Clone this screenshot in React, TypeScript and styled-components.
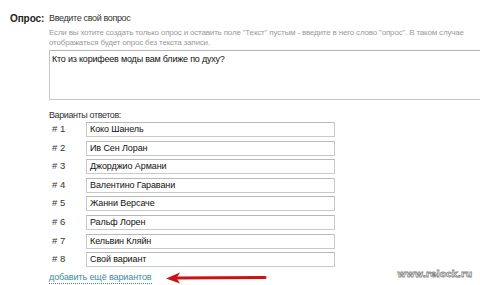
import React from "react";
import styled, { createGlobalStyle } from "styled-components";

const Global = createGlobalStyle`
  html, body { margin: 0; padding: 0; background: #fff; overflow: hidden; }
  body { font-family: Arial, "Liberation Sans", sans-serif; }
`;

const Page = styled.div`
  width: 480px;
  height: 285px;
  position: relative;
  overflow: hidden;
  box-sizing: border-box;
  padding: 12px 0 0 10px;
`;

const Field = styled.div`
  display: grid;
  grid-template-columns: 39px 1fr;
`;

const Label = styled.div`
  font-weight: bold;
  font-size: 10px;
  letter-spacing: -0.1px;
  color: #222;
  line-height: 13px;
`;

const Content = styled.div`
  display: flex;
  flex-direction: column;
  min-width: 0;
`;

const Title = styled.div`
  font-size: 9px;
  letter-spacing: -0.35px;
  color: #333;
  line-height: 13px;
`;

const Hint = styled.div`
  margin-top: 3px;
  font-size: 8px;
  letter-spacing: -0.18px;
  color: #9a9a9a;
  line-height: 10px;
  white-space: nowrap;
`;

const Question = styled.div`
  margin-top: 2px;
  width: 450px;
  height: 50px;
  box-sizing: border-box;
  border: 1px solid #c6c6c6;
  border-top-color: #b4b4b4;
  padding: 2px 2px;
  font-size: 9px;
  letter-spacing: -0.2px;
  color: #111;
  line-height: 12px;
`;

const Sub = styled.div`
  margin-top: 9px;
  font-size: 9px;
  letter-spacing: -0.4px;
  color: #333;
  line-height: 12px;
`;

const Options = styled.div`
  margin-top: 1px;
  display: flex;
  flex-direction: column;
  gap: 3.6px;
`;

const Option = styled.div`
  display: grid;
  grid-template-columns: 37px 249px;
  align-items: start;
`;

const Num = styled.div`
  padding-left: 3px;
  font-size: 9.5px;
  color: #333;
  line-height: 13px;
`;

const Input = styled.div`
  height: 15px;
  box-sizing: border-box;
  border: 1px solid #c9c9c9;
  border-top-color: #b8b8b8;
  padding: 0 3px;
  font-size: 9px;
  letter-spacing: -0.1px;
  color: #111;
  line-height: 13px;
`;

const AddRow = styled.div`
  margin-top: 5px;
  display: flex;
  align-items: flex-start;
`;

const AddLink = styled.a`
  font-size: 9px;
  letter-spacing: -0.1px;
  color: #3d8ca6;
  line-height: 11px;
  text-decoration: none;
  border-bottom: 1px dotted #3d8ca6;
`;

const Arrow = styled.svg`
  margin-left: 13px;
  margin-top: -1px;
`;

const Watermark = styled.div`
  position: absolute;
  right: 8px;
  bottom: 6px;
  font-family: "DejaVu Sans", sans-serif;
  font-weight: bold;
  font-size: 9.5px;
  letter-spacing: -0.2px;
  color: #fff;
  -webkit-text-stroke: 0.8px #8a8a8a;
`;

const options = [
  "Коко Шанель",
  "Ив Сен Лоран",
  "Джорджио Армани",
  "Валентино Гаравани",
  "Жанни Версаче",
  "Ральф Лорен",
  "Кельвин Кляйн",
  "Свой вариант",
];

export default function App() {
  return (
    <Page>
      <Global />
      <Field>
        <Label>Опрос:</Label>
        <Content>
          <Title>Введите свой вопрос</Title>
          <Hint>
            Если вы хотите создать только опрос и оставить поле "Текст" пустым - введите в него слово "опрос". В таком случае
            <br />
            отображаться будет опрос без текста записи.
          </Hint>
          <Question>Кто из корифеев моды вам ближе по духу?</Question>
          <Sub>Варианты ответов:</Sub>
          <Options>
            {options.map((o, i) => (
              <Option key={i}>
                <Num># {i + 1}</Num>
                <Input>{o}</Input>
              </Option>
            ))}
          </Options>
          <AddRow>
            <AddLink href="#">добавить ещё вариантов</AddLink>
            <Arrow width="102" height="14" viewBox="0 0 102 14">
              <path d="M10 7 L100 6.5" stroke="#c81414" strokeWidth="3" strokeLinecap="round" fill="none" />
              <path d="M1 7.5 L15 1.5 L11.5 7 L15 12.5 Z" fill="#c81414" />
            </Arrow>
          </AddRow>
        </Content>
      </Field>
      <Watermark>www.relock.ru</Watermark>
    </Page>
  );
}
